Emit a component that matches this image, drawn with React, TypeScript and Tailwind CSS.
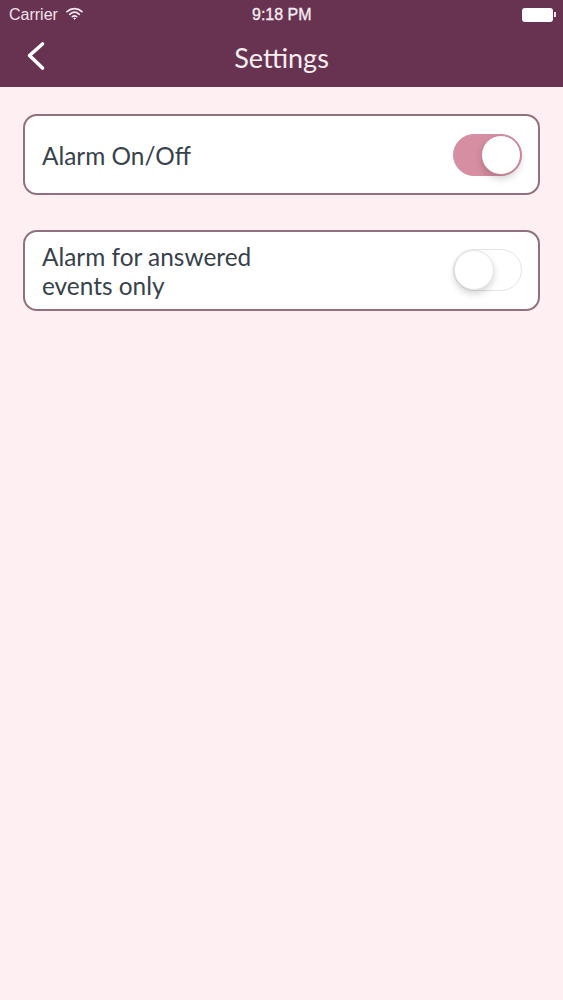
import React from 'react';

const Toggle: React.FC<{ on: boolean }> = ({ on }) => (
  <div
    className={`flex items-center w-[69px] h-[42px] rounded-full border ${
      on ? 'justify-end bg-[#d68fa2] border-[#d68fa2]' : 'justify-start mb-[2px] bg-white border-[#e6e3e3]'
    }`}
  >
    <div
      className={`w-[40px] h-[40px] rounded-full bg-white shadow-[0_4px_7px_rgba(0,0,0,0.16)] ${
        on ? 'border border-[#c98598]' : 'border border-[#e6e3e3]'
      }`}
    />
  </div>
);

const SettingRow: React.FC<{ on: boolean; children: React.ReactNode }> = ({ on, children }) => (
  <div className="flex items-center justify-between h-[81px] pl-[17px] pr-[16px] bg-white border-2 border-[#93707f] rounded-[14px]">
    <p className={`text-[24.4px] leading-[29px] text-[#37424a] ${on ? 'pt-[2px]' : ''}`}>{children}</p>
    <Toggle on={on} />
  </div>
);

export default function App() {
  return (
    <div className="flex flex-col h-[1000px] bg-[#fdeff2] font-['Lato',sans-serif]">
      <header className="h-[87px] bg-[#683350] text-white">
        <div className="relative flex items-center justify-between h-[29px] pl-[9px] pr-[7px] font-['Liberation_Sans',sans-serif] text-[16px]">
          <div className="flex items-center gap-[8px] text-[#f0e2e9]">
            <span>Carrier</span>
            <svg width="17" height="13" viewBox="0 0 17 13" className="mb-[3px]" fill="none" stroke="#f5ebf0" strokeLinecap="round">
              <path d="M1 4.6C5.4.6 11.6.6 16 4.6" strokeWidth="1.7" />
              <path d="M3.7 7.3c2.9-2.5 6.7-2.5 9.6 0" strokeWidth="1.7" />
              <path d="M6.3 9.7c1.4-1 3-1 4.4 0" strokeWidth="1.6" />
              <circle cx="8.5" cy="11.6" r="0.7" fill="#f5ebf0" strokeWidth="0.8" />
            </svg>
          </div>
          <span className="absolute left-[252px] top-[5px] leading-[19px] text-[#f5ecf0] [-webkit-text-stroke:0.35px_#f5ecf0]">9:18 PM</span>
          <div className="flex items-center gap-[1px]">
            <div className="w-[31px] h-[14px] rounded-[3px] bg-white" />
            <div className="w-[2px] h-[5px] bg-[#f0e2e9]" />
          </div>
        </div>
        <div className="relative flex items-center justify-center h-[58px]">
          <svg width="20" height="30" viewBox="0 0 20 30" className="absolute left-[26px] top-[12px]" fill="none" stroke="white" strokeWidth="3.6" strokeLinecap="round" strokeLinejoin="round">
            <path d="M16.5 3 L3.5 14.5 L16.5 27" />
          </svg>
          <h1 className="text-[27px] leading-[32px] text-[#f6edf1]">Settings</h1>
        </div>
      </header>
      <main className="flex flex-col gap-[35px] pt-[27px] px-[23px]">
        <SettingRow on>Alarm On/Off</SettingRow>
        <SettingRow on={false}>
          Alarm for answered
          <br />
          events only
        </SettingRow>
      </main>
    </div>
  );
}
